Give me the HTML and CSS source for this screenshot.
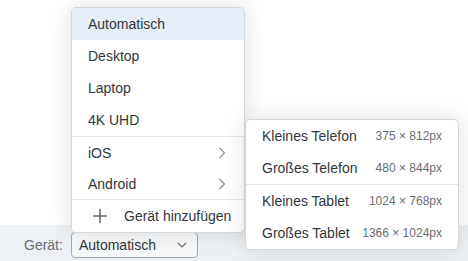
FILE: index.html
```html
<!DOCTYPE html>
<html lang="de">
<head>
<meta charset="utf-8">
<link rel="stylesheet" href="styles.css">
</head>
<body>
<div class="page">
  <div class="stage">
    <div class="menu main-menu">
      <div class="item active">Automatisch</div>
      <div class="item">Desktop</div>
      <div class="item">Laptop</div>
      <div class="item">4K UHD</div>
      <div class="sep"></div>
      <div class="item sub">iOS<svg class="chev" viewBox="0 0 8 12" width="8" height="12"><path d="M1.5 1 L6.5 6 L1.5 11" fill="none" stroke="#8c9094" stroke-width="1.2"/></svg></div>
      <div class="item sub">Android<svg class="chev" viewBox="0 0 8 12" width="8" height="12"><path d="M1.5 1 L6.5 6 L1.5 11" fill="none" stroke="#8c9094" stroke-width="1.2"/></svg></div>
      <div class="sep"></div>
      <div class="item add"><svg class="plus" viewBox="0 0 14 14" width="14" height="14"><path d="M7 0 V14 M0 7 H14" stroke="#6a6d70" stroke-width="1.6"/></svg><span>Gerät hinzufügen</span></div>
    </div>
    <div class="menu sub-menu">
      <div class="item size"><span>Kleines Telefon</span><span class="dim">375 × 812px</span></div>
      <div class="item size"><span>Großes Telefon</span><span class="dim">480 × 844px</span></div>
      <div class="sep"></div>
      <div class="item size"><span>Kleines Tablet</span><span class="dim">1024 × 768px</span></div>
      <div class="item size"><span>Großes Tablet</span><span class="dim">1366 × 1024px</span></div>
    </div>
  </div>
  <div class="toolbar">
    <span class="label">Gerät:</span>
    <div class="select"><span>Automatisch</span><svg class="down" viewBox="0 0 10 6" width="10" height="6"><path d="M1 1 L5 5 L9 1" fill="none" stroke="#6a6d70" stroke-width="1.1"/></svg></div>
  </div>
</div>
</body>
</html>
```
FILE: styles.css
```css
html, body {
  margin: 0;
  padding: 0;
  background: #ffffff;
}
body {
  font-family: "Liberation Sans", Arial, sans-serif;
  font-size: 14px;
  color: #32363a;
}
.page {
  position: relative;
  width: 468px;
  height: 261px;
  display: flex;
  flex-direction: column;
  overflow: hidden;
}
.stage {
  flex: 1;
}
.toolbar {
  height: 36px;
  background: #edf0f4;
  display: flex;
  align-items: center;
  padding-left: 24px;
  gap: 8px;
  padding-top: 3px;
  box-sizing: border-box;
}
.label {
  color: #6a6d70;
}
.select {
  width: 127px;
  height: 26px;
  box-sizing: border-box;
  border: 1px solid #a4a9ae;
  border-radius: 4px;
  background: #f7f8f9;
  display: flex;
  align-items: center;
  justify-content: space-between;
  padding: 0 10px 0 7px;
  color: #32363a;
}
.menu {
  position: absolute;
  background: #ffffff;
  border: 1px solid #d5d8db;
  border-radius: 5px;
  box-shadow: 0 0 22px rgba(0, 0, 0, 0.13);
  overflow: hidden;
  z-index: 2;
}
.main-menu {
  left: 71px;
  top: 7px;
  width: 172px;
}
.sub-menu {
  left: 245px;
  top: 119px;
  width: 212px;
  z-index: 3;
}
.item {
  height: 32px;
  display: flex;
  align-items: center;
  padding: 0 16px;
  box-sizing: border-box;
  white-space: nowrap;
}
.item.active {
  background: #e6eef7;
}
.item.sub {
  height: 31px;
  justify-content: space-between;
  padding-right: 18px;
}
.item.add {
  padding-left: 21px;
  gap: 17px;
}
.plus {
  flex: none;
}
.sep {
  height: 1px;
  background: #e4e6e8;
}
.item.size {
  justify-content: space-between;
}
.dim {
  font-size: 12px;
  color: #6a6d70;
}
```
